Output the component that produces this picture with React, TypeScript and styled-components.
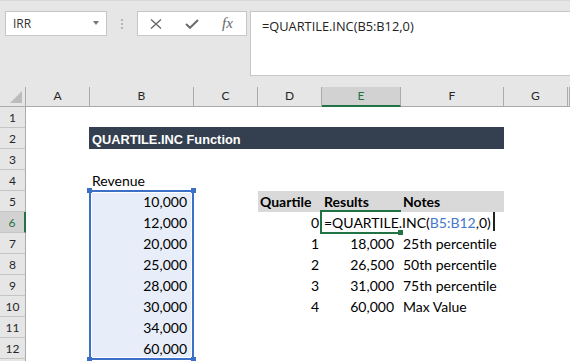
import React from "react";
import styled, { createGlobalStyle, css } from "styled-components";

const GlobalStyle = createGlobalStyle`
  html, body {
    margin: 0;
    padding: 0;
  }
  body {
    background: #ffffff;
    overflow: hidden;
  }
`;

const chrome = "#e6e6e6";
const boxLine = "#c6c6c6";
const headerLine = "#ababab";
const rowLine = "#c4c4c4";
const activeHeader = "#d2d2d2";
const excelGreen = "#217346";
const selectBlue = "#3c6fc6";
const selectFill = "#e7eef9";
const bandDark = "#343f50";
const bandLight = "#d9d9d9";

const Frame = styled.div`
  width: 570px;
  height: 361px;
  overflow: hidden;
  background: ${chrome};
  display: flex;
  flex-direction: column;
`;

// formula bar
const FormulaArea = styled.div`
  flex: 0 0 87px;
  box-sizing: border-box;
  border-top: 1px solid #d8d8d8;
  padding: 10px 0 0 5px;
  display: flex;
  align-items: flex-start;
  font-family: "Open Sans", "Liberation Sans", sans-serif;
  font-size: 12px;
  color: #333;
`;

const NameBox = styled.div`
  width: 102px;
  height: 25px;
  box-sizing: border-box;
  border: 1px solid ${boxLine};
  background: #fff;
  display: flex;
  align-items: center;
  justify-content: space-between;
  padding: 0 7px 0 7px;
  line-height: 23px;
`;

const DropArrow = styled.span`
  width: 0;
  height: 0;
  margin-top: -2px;
  border-left: 3px solid transparent;
  border-right: 3px solid transparent;
  border-top: 4px solid #777;
`;

const Grip = styled.div`
  margin: 8px 0 0 14px;
  display: flex;
  flex-direction: column;
  gap: 2px;
`;

const GripDot = styled.span`
  width: 2px;
  height: 2px;
  background: #b4b4b4;
`;

const FuncBox = styled.div`
  margin-left: 14px;
  width: 110px;
  height: 25px;
  box-sizing: border-box;
  border: 1px solid ${boxLine};
  background: #fff;
  display: flex;
  align-items: center;
  padding: 1px 0 0 12px;
`;

const FuncIcon = styled.svg<{ $gap?: number }>`
  display: block;
  margin-left: ${(p) => p.$gap ?? 0}px;
`;

const FxLabel = styled.span`
  margin-left: 23px;
  font-family: "Liberation Serif", "DejaVu Serif", serif;
  font-style: italic;
  font-size: 15px;
  line-height: 15px;
  color: #666;
  margin-top: -2px;
`;

const FormulaBox = styled.div`
  margin-left: 3px;
  flex: 1;
  height: 65px;
  box-sizing: border-box;
  border: 1px solid ${boxLine};
  border-right: none;
  background: #fff;
  padding: 6px 0 0 11px;
  font-size: 12.8px;
  line-height: 16px;
  color: #222;
  white-space: nowrap;
`;

// sheet
const Sheet = styled.div`
  flex: 1;
  display: grid;
  grid-template-columns: 26px 64px 104px 64px 64px 79px 103px 64px 1fr;
  grid-template-rows: 20px repeat(13, 21px);
  background: #fff;
  font-family: Lato, "Liberation Sans", sans-serif;
  font-size: 14px;
  font-variant-numeric: tabular-nums;
  color: #000;
`;

const Corner = styled.div`
  grid-row: 1;
  grid-column: 1;
  box-sizing: border-box;
  background: ${chrome};
  border-right: 1px solid ${headerLine};
  border-bottom: 1px solid ${headerLine};
  display: flex;
  align-items: flex-end;
  justify-content: flex-end;
  padding: 0 3px 3px 0;
`;

const ColHead = styled.div<{ $col: number; $active?: boolean }>`
  grid-row: 1;
  grid-column: ${(p) => p.$col + 2};
  box-sizing: border-box;
  overflow: hidden;
  background: ${(p) => (p.$active ? activeHeader : chrome)};
  border-right: 1px solid ${headerLine};
  border-bottom: ${(p) =>
    p.$active ? `2px solid ${excelGreen}` : `1px solid ${headerLine}`};
  color: ${(p) => (p.$active ? excelGreen : "#262626")};
  font-size: 12px;
  line-height: 18px;
  text-align: center;
`;

const RowHead = styled.div<{ $row: number; $active?: boolean }>`
  grid-row: ${(p) => p.$row + 1};
  grid-column: 1;
  box-sizing: border-box;
  background: ${(p) => (p.$active ? activeHeader : chrome)};
  border-bottom: 1px solid ${rowLine};
  border-right: ${(p) =>
    p.$active ? `2px solid ${excelGreen}` : `1px solid ${headerLine}`};
  color: ${(p) => (p.$active ? excelGreen : "#262626")};
  font-size: 12px;
  line-height: 22px;
  text-align: center;
`;

interface PlaceProps {
  $row: number;
  $col: number;
  $span?: number;
  $rows?: number;
}

const place = css<PlaceProps>`
  grid-row: ${(p) => p.$row + 1} / span ${(p) => p.$rows ?? 1};
  grid-column: ${(p) => p.$col + 2} / span ${(p) => p.$span ?? 1};
`;

interface CellProps extends PlaceProps {
  $align?: "left" | "right";
  $pad?: number;
  $bold?: boolean;
  $fill?: string;
}

const Cell = styled.div<CellProps>`
  ${place};
  position: relative;
  white-space: nowrap;
  line-height: 21px;
  text-align: ${(p) => p.$align ?? "left"};
  padding: ${(p) =>
    p.$align === "right" ? `0 ${p.$pad ?? 3}px 0 0` : `0 0 0 ${p.$pad ?? 2}px`};
  font-weight: ${(p) => (p.$bold ? 700 : 400)};
  background: ${(p) => p.$fill ?? "transparent"};
`;

const TitleBand = styled.div<PlaceProps>`
  ${place};
  position: relative;
  margin: -1px 0 0 -1px;
  padding-left: 3px;
  background: ${bandDark};
  color: #fff;
  font-family: "Liberation Sans", Arial, sans-serif;
  font-weight: 700;
  font-size: 12.8px;
  line-height: 25px;
  white-space: nowrap;
`;

const Selection = styled.div<PlaceProps>`
  ${place};
  position: relative;
  margin: -1px 0 -1px -1px;
  border: 2px solid ${selectBlue};
  background: ${selectFill};
  box-shadow: inset 0 0 0 1px #fff;
`;

const Handle = styled.span<{ $x: "left" | "right"; $y: "top" | "bottom"; $color: string }>`
  position: absolute;
  ${(p) => p.$x}: -4px;
  ${(p) => p.$y}: -4px;
  width: 5px;
  height: 5px;
  background: ${(p) => p.$color};
`;

const Editor = styled.div<PlaceProps>`
  ${place};
  position: relative;
  margin: -2px 0 -1px -2px;
  border: 2px solid ${excelGreen};
  border-right: none;
  padding-left: 2px;
  line-height: 21px;
  white-space: nowrap;
`;

const EditHandle = styled.span`
  position: absolute;
  right: -2px;
  bottom: -3px;
  width: 5px;
  height: 5px;
  background: ${excelGreen};
`;

const RefText = styled.span`
  color: #4677cc;
`;

const Caret = styled.span`
  display: inline-block;
  width: 2px;
  height: 19px;
  margin-left: 2px;
  vertical-align: -3px;
  background: #222;
`;

const columns = ["A", "B", "C", "D", "E", "F", "G", "H"];
const rows = Array.from({ length: 13 }, (_, i) => i + 1);
const revenue = ["10,000", "12,000", "20,000", "25,000", "28,000", "30,000", "34,000", "60,000"];
const results = [
  { q: "1", value: "18,000", note: "25th percentile" },
  { q: "2", value: "26,500", note: "50th percentile" },
  { q: "3", value: "31,000", note: "75th percentile" },
  { q: "4", value: "60,000", note: "Max Value" },
];

export default function App() {
  return (
    <Frame>
      <GlobalStyle />
      <FormulaArea>
        <NameBox>
          <span>IRR</span>
          <DropArrow />
        </NameBox>
        <Grip>
          <GripDot />
          <GripDot />
          <GripDot />
        </Grip>
        <FuncBox>
          <FuncIcon width="12" height="10" viewBox="0 0 12 10">
            <path d="M1 0.5 L11 9.5 M11 0.5 L1 9.5" stroke="#6b6b6b" strokeWidth="1.4" fill="none" />
          </FuncIcon>
          <FuncIcon $gap={23} width="14" height="10" viewBox="0 0 14 10">
            <path d="M1 5 L5 8.8 L13 1" stroke="#6b6b6b" strokeWidth="2" fill="none" />
          </FuncIcon>
          <FxLabel>fx</FxLabel>
        </FuncBox>
        <FormulaBox>=QUARTILE.INC(B5:B12,0)</FormulaBox>
      </FormulaArea>

      <Sheet>
        <Corner>
          <svg width="12" height="12" viewBox="0 0 12 12">
            <polygon points="12,0 12,12 0,12" fill="#bcbcbc" />
          </svg>
        </Corner>
        {columns.map((c, i) => (
          <ColHead key={c} $col={i} $active={c === "E"}>
            {i < 7 ? c : ""}
          </ColHead>
        ))}
        {rows.map((r) => (
          <RowHead key={r} $row={r} $active={r === 6}>
            {r < 13 ? r : ""}
          </RowHead>
        ))}

        <TitleBand $row={2} $col={1} $span={5}>
          QUARTILE.INC Function
        </TitleBand>

        <Cell $row={4} $col={1}>
          Revenue
        </Cell>
        <Selection $row={5} $col={1} $rows={8}>
          <Handle $x="left" $y="top" $color={selectBlue} />
          <Handle $x="right" $y="top" $color={selectBlue} />
          <Handle $x="left" $y="bottom" $color={selectBlue} />
          <Handle $x="right" $y="bottom" $color={selectBlue} />
        </Selection>
        {revenue.map((v, i) => (
          <Cell key={v + i} $row={5 + i} $col={1} $align="right" $pad={7}>
            {v}
          </Cell>
        ))}

        <Cell $row={5} $col={3} $bold $fill={bandLight}>
          Quartile
        </Cell>
        <Cell $row={5} $col={4} $bold $fill={bandLight}>
          Results
        </Cell>
        <Cell $row={5} $col={5} $bold $fill={bandLight}>
          Notes
        </Cell>

        <Cell $row={6} $col={3} $align="right">
          0
        </Cell>
        <Editor $row={6} $col={4}>
          =QUARTILE.INC(<RefText>B5:B12</RefText>,0)
          <Caret />
          <EditHandle />
        </Editor>

        {results.map((r, i) => (
          <React.Fragment key={r.q}>
            <Cell $row={7 + i} $col={3} $align="right">
              {r.q}
            </Cell>
            <Cell $row={7 + i} $col={4} $align="right" $pad={7}>
              {r.value}
            </Cell>
            <Cell $row={7 + i} $col={5}>
              {r.note}
            </Cell>
          </React.Fragment>
        ))}
      </Sheet>
    </Frame>
  );
}
